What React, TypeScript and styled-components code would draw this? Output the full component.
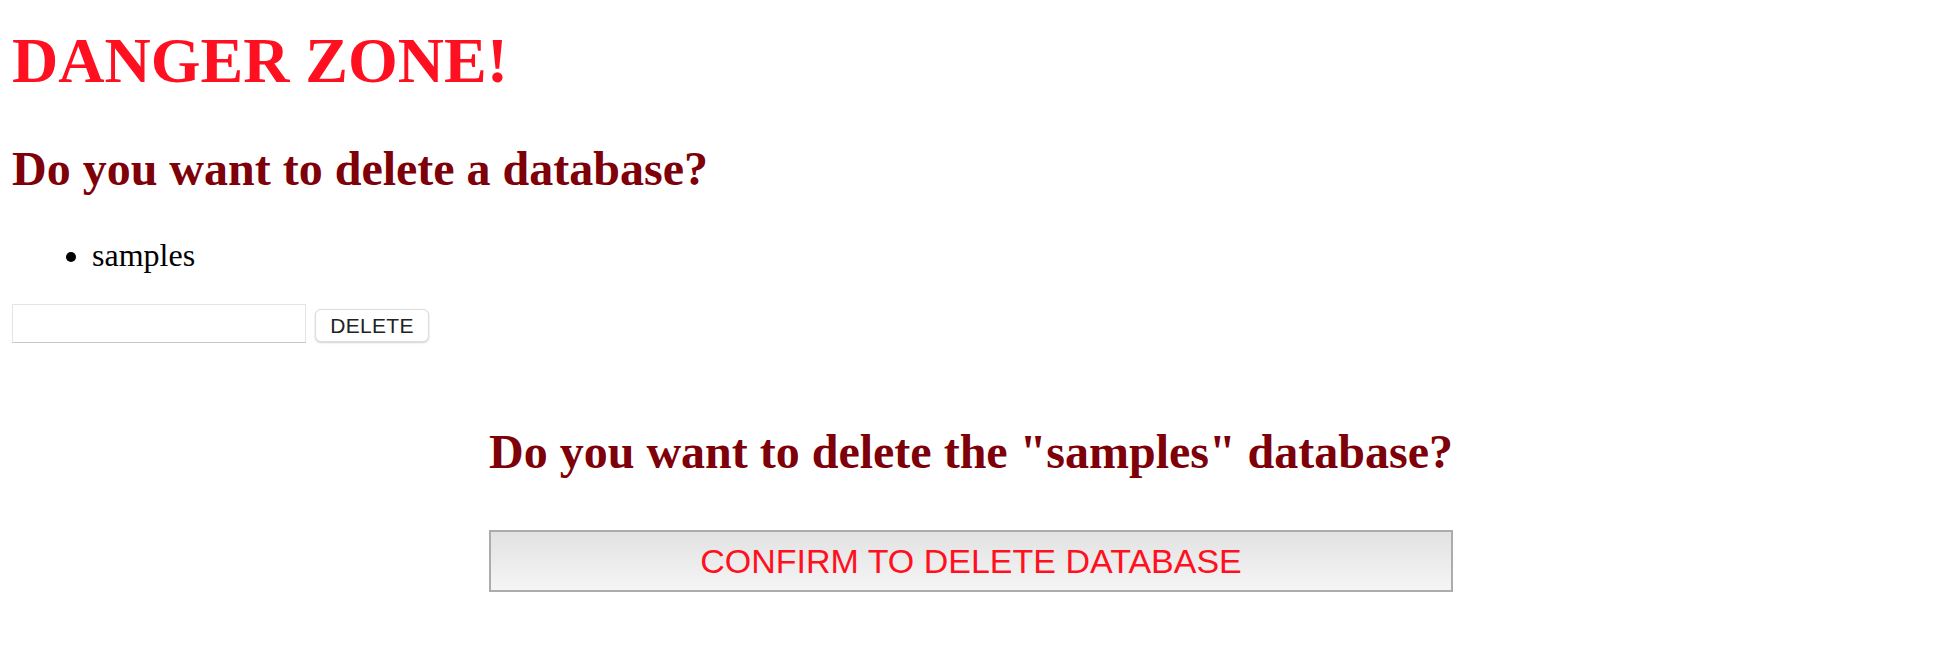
import React from 'react';
import styled, {createGlobalStyle} from 'styled-components';

const GlobalStyle = createGlobalStyle`
  html, body {
    margin: 0;
    padding: 0;
    background: #fff;
  }
  body {
    font-family: "Liberation Serif", "Times New Roman", serif;
    font-size: 32px;
    color: #000;
  }
`

const Page = styled.div`
    padding: 24px 12px 0;
`

const Title = styled.h1`
    margin: 0;
    font-size: 64px;
    line-height: 74px;
    font-weight: bold;
    color: #ff1021;
`

const Question = styled.h2`
    margin: 0;
    font-size: 48px;
    line-height: 56px;
    font-weight: bold;
    color: #7e0008;
`

const AskSection = styled.section`
    margin-top: 43px;
`

const DbList = styled.ul`
    margin: 40px 0 0;
    padding-left: 80px;
    line-height: 37px;
    list-style: disc;
`

const DeleteRow = styled.div`
    display: flex;
    align-items: flex-end;
    gap: 9px;
    margin-top: 30px;
`

const NameInput = styled.input`
    box-sizing: border-box;
    width: 294px;
    height: 39px;
    margin: 0;
    padding: 0 6px;
    border: 1px solid #e4e4e4;
    border-bottom-color: #c6c6c6;
    font-size: 20px;
    outline: none;
`

const SmallButton = styled.button`
    box-sizing: border-box;
    width: 114px;
    height: 33px;
    margin: 0 0 1px;
    padding: 0;
    border: 1px solid #dcdcdc;
    border-radius: 6px;
    background: #fff;
    box-shadow: 0 1px 2px rgba(0, 0, 0, 0.18);
    font-family: "Liberation Sans", Arial, sans-serif;
    font-size: 21px;
    letter-spacing: 0.3px;
    color: #222;
`

const ConfirmSection = styled.section`
    display: flex;
    justify-content: center;
    margin-top: 81px;
`

const ConfirmBox = styled.div`
    display: flex;
    flex-direction: column;
    align-items: stretch;
`

const ConfirmButton = styled.button`
    box-sizing: border-box;
    height: 62px;
    margin-top: 50px;
    border: 2px solid #acacac;
    background: linear-gradient(to bottom, #e2e2e2, #f5f5f5);
    font-family: "Liberation Sans", Arial, sans-serif;
    font-size: 34px;
    color: #ff1021;
    padding: 0;
`

function App() {
  return (
    <Page>
      <GlobalStyle/>
      <Title>DANGER ZONE!</Title>
      <AskSection>
        <Question>Do you want to delete a database?</Question>
        <DbList>
          <li>samples</li>
        </DbList>
        <DeleteRow>
          <NameInput type="text"/>
          <SmallButton>DELETE</SmallButton>
        </DeleteRow>
      </AskSection>
      <ConfirmSection>
        <ConfirmBox>
          <Question>Do you want to delete the "samples" database?</Question>
          <ConfirmButton>CONFIRM TO DELETE DATABASE</ConfirmButton>
        </ConfirmBox>
      </ConfirmSection>
    </Page>
  );
}

export default App;
